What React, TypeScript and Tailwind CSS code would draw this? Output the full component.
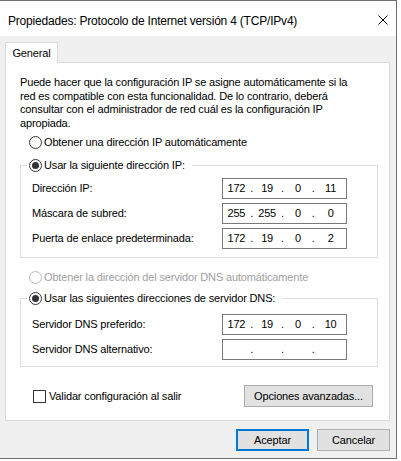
import React from 'react';

const BODY_FONT = "font-['Liberation_Sans',Arial,sans-serif]";

function Radio({ checked = false, disabled = false }: { checked?: boolean; disabled?: boolean }) {
  return (
    <span
      className={`flex h-[13px] w-[13px] shrink-0 items-center justify-center rounded-full border bg-white ${
        disabled ? 'border-[#bcbcbc]' : 'border-[#333333]'
      }`}
    >
      {checked && <span className="h-[7px] w-[7px] rounded-full bg-[#333333]" />}
    </span>
  );
}

function IpField({ value }: { value?: string[] }) {
  const parts = value ?? ['', '', '', ''];
  return (
    <div className="grid h-[21px] w-[125px] shrink-0 grid-cols-4 border border-[#7a7a7a] bg-white">
      {parts.map((p, i) => (
        <div key={i} className="flex items-center">
          <span className="flex-1 text-center">{p}</span>
          {i < 3 && <span className="w-[4px] text-center">.</span>}
        </div>
      ))}
    </div>
  );
}

function Row({ label, value }: { label: string; value?: string[] }) {
  return (
    <div className="flex h-[21px] items-center">
      <span className="flex-1">{label}</span>
      <IpField value={value} />
    </div>
  );
}

export default function App() {
  return (
    <div className={`relative h-[461px] w-[401px] overflow-hidden bg-white text-[11px] tracking-[-0.15px] text-black ${BODY_FONT}`}>
      <div className="flex h-[459px] w-[397px] flex-col border-t border-r border-b border-[#6e6e6e] bg-[#f0f0f0]">
        {/* title bar */}
        <div className="flex h-[35px] shrink-0 items-center bg-white pl-[8px] pr-[8px]">
          <span className="mt-[4px] flex-1 text-[12px] tracking-[-0.2px]">
            Propiedades: Protocolo de Internet versión 4 (TCP/IPv4)
          </span>
          <svg className="mt-[2px]" width="10" height="10" viewBox="0 0 10 10">
            <path d="M0.5 0.5 L9.5 9.5 M9.5 0.5 L0.5 9.5" stroke="#000" strokeWidth="1" fill="none" />
          </svg>
        </div>

        <div className="flex flex-1 flex-col pt-[6px] pl-[5px] pr-[6px]">
          {/* tab */}
          <div className="relative z-10 -mb-px flex h-[21px] w-[53px] items-center justify-center border border-b-0 border-[#d9d9d9] bg-white">
            General
          </div>

          {/* tab panel */}
          <div className="flex h-[359px] flex-col border border-[#d9d9d9] bg-white pt-[13px] pl-[14px] pr-[11px]">
            <p className="leading-[13.5px]">
              Puede hacer que la configuración IP se asigne automáticamente si la
              <br />
              red es compatible con esta funcionalidad. De lo contrario, deberá
              <br />
              consultar con el administrador de red cuál es la configuración IP
              <br />
              apropiada.
            </p>

            <div className="mt-[5px] ml-[9px] flex h-[15px] items-center gap-[2px]">
              <Radio />
              <span>Obtener una dirección IP automáticamente</span>
            </div>

            <fieldset className="mt-[8px] border border-[#dcdcdc] pt-[5px] pb-[8px] pl-[11px] pr-[30px]">
              <legend className="-ml-[5px] pl-[2px] pr-[7px]">
                <span className="flex h-[15px] items-center gap-[2px]">
                  <Radio checked />
                  <span>Usar la siguiente dirección IP:</span>
                </span>
              </legend>
              <div className="flex flex-col gap-[4px]">
                <Row label="Dirección IP:" value={['172', '19', '0', '11']} />
                <Row label="Máscara de subred:" value={['255', '255', '0', '0']} />
                <Row label="Puerta de enlace predeterminada:" value={['172', '19', '0', '2']} />
              </div>
            </fieldset>

            <div className="mt-[12px] ml-[9px] flex h-[15px] items-center gap-[2px] text-[#a0a0a0]">
              <Radio disabled />
              <span>Obtener la dirección del servidor DNS automáticamente</span>
            </div>

            <fieldset className="mt-[6px] border border-[#dcdcdc] pt-[8px] pb-[6px] pl-[11px] pr-[30px]">
              <legend className="-ml-[5px] pl-[2px] pr-[7px]">
                <span className="flex h-[15px] items-center gap-[2px]">
                  <Radio checked />
                  <span>Usar las siguientes direcciones de servidor DNS:</span>
                </span>
              </legend>
              <div className="flex flex-col gap-[4px]">
                <Row label="Servidor DNS preferido:" value={['172', '19', '0', '10']} />
                <Row label="Servidor DNS alternativo:" />
              </div>
            </fieldset>

            <div className="mt-[18px] flex h-[22px] items-center">
              <div className="ml-[13px] flex flex-1 items-center gap-[3px]">
                <span className="h-[13px] w-[13px] border border-[#333333] bg-white" />
                <span>Validar configuración al salir</span>
              </div>
              <button className="mr-[5px] h-[22px] w-[129px] border border-[#adadad] bg-[#e1e1e1]">
                Opciones avanzadas...
              </button>
            </div>
          </div>

          {/* dialog buttons */}
          <div className="mt-[8px] flex justify-end gap-[8px]">
            <button className="h-[22px] w-[73px] border-2 border-[#0078d7] bg-[#e1e1e1]">Aceptar</button>
            <button className="h-[22px] w-[73px] border border-[#adadad] bg-[#e1e1e1]">Cancelar</button>
          </div>
        </div>
      </div>
    </div>
  );
}
